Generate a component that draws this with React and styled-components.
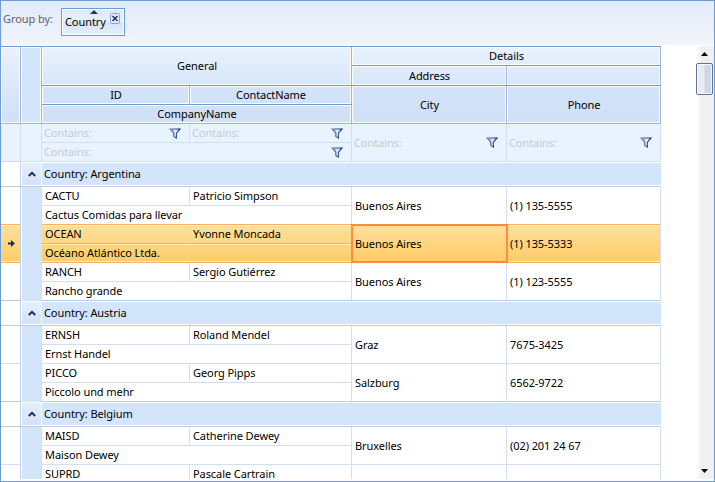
import React from "react";
import styled, { createGlobalStyle, css } from "styled-components";

const Reset = createGlobalStyle`
  *, *::before, *::after { box-sizing: border-box; }
  body { margin: 0; background: #fff; overflow: hidden; }
`;

const COLUMNS = "148px 162px 155px 154px";

const Frame = styled.div`
  width: 715px;
  height: 482px;
  display: flex;
  flex-direction: column;
  border: 1px solid #6f9bd5;
  background: #fff;
  color: #000;
  font: 11px/18px "Noto Sans", "Open Sans", sans-serif;
  letter-spacing: -0.08px;
  white-space: nowrap;
  overflow: hidden;
`;

const GroupPanel = styled.div`
  flex: none;
  height: 45px;
  display: flex;
  align-items: flex-start;
  padding: 7px 0 0 2px;
  border-bottom: 1px solid #fff;
  background: linear-gradient(#e1ebfa, #f1f4fc);
  color: #5c626e;
`;

const GroupLabel = styled.span`
  width: 58px;
  padding-top: 2px;
`;

const GroupChip = styled.div`
  position: relative;
  width: 64px;
  height: 28px;
  padding: 4px 0 0 3px;
  border: 1px solid #6f9bd5;
  box-shadow: inset 0 0 0 1px #fff;
  background: linear-gradient(#d8e7fa, #e9f2fd 48%, #d3e3f9 52%, #e6f0fc);
  color: #000;
`;

const SortMark = styled.svg`
  position: absolute;
  left: 28px;
  top: 1px;
`;

const CloseBox = styled.svg`
  position: absolute;
  right: 4px;
  top: 4px;
`;

const Body = styled.div`
  flex: 1;
  min-height: 0;
  display: flex;
`;

const Table = styled.div`
  width: 660px;
  height: 433px;
  overflow: hidden;
`;

const Line = styled.div`
  display: grid;
  grid-template-columns: 20px 21px 619px;
  height: ${(p) => p.$h}px;
`;

const HeadLine = styled(Line)`
  height: 78px;
`;

const HeadCell = styled.div`
  display: flex;
  align-items: center;
  justify-content: center;
  padding-left: 1px;
  grid-area: ${(p) => p.$area};
  border-right: 1px solid #a0b5d4;
  border-bottom: 1px solid ${(p) => (p.$last ? "#a0b5d4" : "#6f9bd5")};
  box-shadow: inset 0 0 0 1px #fbfdff;
  background: linear-gradient(${(p) => p.$from}, ${(p) => p.$to});
`;

const HeadGrid = styled.div`
  display: grid;
  grid-template-columns: ${COLUMNS};
  grid-template-rows: 19px 20px 19px 19px;
  border-top: 1px solid #6f9bd5;
`;

const HeadSide = styled.div`
  border-top: 1px solid #6f9bd5;
  border-right: 1px solid #a0b5d4;
  border-bottom: 1px solid #a0b5d4;
  box-shadow: inset 0 0 0 1px #fbfdff;
  background: ${(p) => (p.$flat ? "#d3e5fb" : "linear-gradient(#e9f2fd, #cfdff7)")};
`;

const FilterSide = styled.div`
  background: #e9f3ff;
  border-right: 1px solid #d0dff3;
  border-bottom: 1px solid #d0dff3;
`;

const CellGrid = styled.div`
  display: grid;
  grid-template-columns: ${COLUMNS};
  grid-template-rows: 19px 19px;
`;

const FilterCell = styled.div`
  grid-area: ${(p) => p.$area};
  display: flex;
  align-items: center;
  justify-content: space-between;
  padding: 0 8px 0 2px;
  border-right: 1px solid #d0dff3;
  border-bottom: 1px solid #d0dff3;
  background: #e9f3ff;
  color: #c6c9cf;
`;

const Indicator = styled.div`
  display: flex;
  align-items: center;
  justify-content: center;
  padding-left: 2px;
  border-right: 1px solid #bfd0e9;
  border-bottom: 1px solid ${(p) => (p.$end ? "#bacbe5" : "#d0dff3")};
  ${(p) =>
    p.$selected &&
    css`
      margin-top: -1px;
      border-top: 1px solid #fdb15e;
      border-bottom-color: #fdb15e;
      box-shadow: inset 0 1px #fff3ac, inset 0 -1px #fff09a;
      background: linear-gradient(#ffe09d, #ffcc67);
    `}
`;

const Indent = styled.div`
  margin-left: 1px;
  border-right: 1px solid #d0dff3;
  background: #d3e5fb;
`;

const GroupIndicator = styled.div`
  border-right: 1px solid #bfd0e9;
  border-bottom: 1px solid #bacbe5;
`;

const Expander = styled.div`
  display: flex;
  align-items: center;
  justify-content: center;
  border-bottom: 1px solid #bacbe5;
  box-shadow: inset 0 0 0 1px #fff;
  background: linear-gradient(#e6effb, #d3e2f7);
`;

const GroupTitle = styled.div`
  padding: 3px 0 0 2px;
  border-bottom: 1px solid #bacbe5;
  box-shadow: inset 0 1px #fff, inset 0 -1px #fff;
  background: #d3e5fb;
`;

const Cell = styled.div`
  grid-area: ${(p) => p.$area};
  display: flex;
  align-items: center;
  padding-left: 3px;
  border-right: 1px solid #d0dff3;
  border-bottom: 1px solid ${(p) => (p.$end ? "#bacbe5" : "#d0dff3")};
  ${(p) =>
    p.$selected &&
    css`
      border-bottom-color: #fdb15e;
      box-shadow: inset 0 1px #fff3ac${(p) => (p.$half ? "" : ", inset 0 -1px #fff09a")};
      background: ${p.$tone};
    `}
  ${(p) =>
    p.$selected &&
    p.$top &&
    css`
      margin-top: -1px;
      border-top: 1px solid #fdb15e;
    `}
  ${(p) =>
    p.$current &&
    css`
      position: relative;
      margin: -1px -1px 0 -1px;
      padding-left: 2px;
      border: 2px solid #ff8b3d;
      box-shadow: none;
      z-index: 1;
    `}
`;

const ScrollTrack = styled.div`
  flex: none;
  width: 18px;
  height: 433px;
  margin-left: auto;
  padding-right: 1px;
  display: flex;
  flex-direction: column;
  align-items: center;
  background: linear-gradient(90deg, #fff, #f0f0f0 30%);
  svg { flex: none; }
`;

const ScrollThumb = styled.div`
  width: 17px;
  height: 32px;
  margin: 7px 0 auto 0;
  border: 1px solid #5f7396;
  border-radius: 2px;
  box-shadow: inset 0 0 0 1px #f8fafd;
  background: linear-gradient(90deg, #e9ebf1 48%, #cfd6e5 52%);
`;

const Arrow = styled.svg`
  margin: ${(p) => (p.$down ? "0 1px 6px 0" : "6px 1px 0 0")};
`;

const Funnel = () => (
  <svg width="12" height="11" viewBox="0 0 12 11">
    <defs>
      <linearGradient id="funnel" x2="1">
        <stop offset="0" stopColor="#fff" />
        <stop offset="0.25" stopColor="#8fb0e6" />
        <stop offset="0.55" stopColor="#edf4fe" />
        <stop offset="1" stopColor="#9fb8dc" />
      </linearGradient>
      <linearGradient id="rim" x2="1">
        <stop offset="0" stopColor="#6583bd" />
        <stop offset="1" stopColor="#122b62" />
      </linearGradient>
    </defs>
    <path d="M1 1H11L7.4 5.2V10L4.8 8.4V5.2Z" fill="url(#funnel)" stroke="url(#rim)" strokeWidth="1.1" />
  </svg>
);

const Chevron = () => (
  <svg width="8" height="6" viewBox="0 0 8 6">
    <path d="M0.8 5L4 1.8L7.2 5" fill="none" stroke="#142e66" strokeWidth="2" />
  </svg>
);

const CurrentArrow = () => (
  <svg width="7" height="7" viewBox="0 0 7 7">
    <path d="M0 2.5H3V0L7 3.5L3 7V4.5H0Z" fill="#142e66" />
  </svg>
);

const GROUPS = [
  {
    country: "Argentina",
    rows: [
      ["CACTU", "Patricio Simpson", "Cactus Comidas para llevar", "Buenos Aires", "(1) 135-5555"],
      ["OCEAN", "Yvonne Moncada", "Océano Atlántico Ltda.", "Buenos Aires", "(1) 135-5333"],
      ["RANCH", "Sergio Gutiérrez", "Rancho grande", "Buenos Aires", "(1) 123-5555"],
    ],
  },
  {
    country: "Austria",
    rows: [
      ["ERNSH", "Roland Mendel", "Ernst Handel", "Graz", "7675-3425"],
      ["PICCO", "Georg Pipps", "Piccolo und mehr", "Salzburg", "6562-9722"],
    ],
  },
  {
    country: "Belgium",
    rows: [
      ["MAISD", "Catherine Dewey", "Maison Dewey", "Bruxelles", "(02) 201 24 67"],
      ["SUPRD", "Pascale Cartrain", "", "", ""],
    ],
  },
];

function Header() {
  return (
    <HeadLine>
      <HeadSide />
      <HeadSide $flat />
      <HeadGrid>
        <HeadCell $area="1 / 1 / 3 / 3" $from="#e9f2fd" $to="#d7e7fa">General</HeadCell>
        <HeadCell $area="3 / 1 / 4 / 2" $from="#d3e4fa" $to="#d1e1f8">ID</HeadCell>
        <HeadCell $area="3 / 2 / 4 / 3" $from="#d3e4fa" $to="#d1e1f8">ContactName</HeadCell>
        <HeadCell $area="4 / 1 / 5 / 3" $from="#d1e1f8" $to="#cfdff6" $last>CompanyName</HeadCell>
        <HeadCell $area="1 / 3 / 2 / 5" $from="#e9f2fd" $to="#e1edfb">Details</HeadCell>
        <HeadCell $area="2 / 3 / 3 / 4" $from="#dfebfb" $to="#d7e7fa">Address</HeadCell>
        <HeadCell $area="2 / 4 / 3 / 5" $from="#dfebfb" $to="#d7e7fa" />
        <HeadCell $area="3 / 3 / 5 / 4" $from="#d3e4fa" $to="#cfdff6" $last>City</HeadCell>
        <HeadCell $area="3 / 4 / 5 / 5" $from="#d3e4fa" $to="#cfdff6" $last>Phone</HeadCell>
      </HeadGrid>
    </HeadLine>
  );
}

function FilterRow() {
  const areas = ["1 / 1 / 2 / 2", "1 / 2 / 2 / 3", "2 / 1 / 3 / 3", "1 / 3 / 3 / 4", "1 / 4 / 3 / 5"];
  return (
    <Line $h={38}>
      <FilterSide />
      <FilterSide />
      <CellGrid>
        {areas.map((area) => (
          <FilterCell key={area} $area={area}>
            Contains:
            <Funnel />
          </FilterCell>
        ))}
      </CellGrid>
    </Line>
  );
}

function Record({ data, selected, end }) {
  const [id, contact, company, city, phone] = data;
  const upper = "linear-gradient(#ffe09d, #ffd683)";
  const lower = "linear-gradient(#ffd681, #ffcc67)";
  const full = "linear-gradient(#ffe09d, #ffcc67)";
  return (
    <Line $h={38}>
      <Indicator $selected={selected} $end={end}>{selected && <CurrentArrow />}</Indicator>
      <Indent />
      <CellGrid>
        <Cell $area="1 / 1 / 2 / 2" $selected={selected} $top $half $tone={upper}>{id}</Cell>
        <Cell $area="1 / 2 / 2 / 3" $selected={selected} $top $half $tone={upper}>{contact}</Cell>
        <Cell $area="2 / 1 / 3 / 3" $selected={selected} $tone={lower} $end={end}>{company}</Cell>
        <Cell $area="1 / 3 / 3 / 4" $selected={selected} $top $tone={full} $current={selected} $end={end}>{city}</Cell>
        <Cell $area="1 / 4 / 3 / 5" $selected={selected} $top $tone={full} $end={end}>{phone}</Cell>
      </CellGrid>
    </Line>
  );
}

function Group({ group }) {
  return (
    <>
      <Line $h={25}>
        <GroupIndicator />
        <Expander><Chevron /></Expander>
        <GroupTitle>Country: {group.country}</GroupTitle>
      </Line>
      {group.rows.map((data, i) => (
        <Record key={data[0]} data={data} selected={data[0] === "OCEAN"} end={i === group.rows.length - 1} />
      ))}
    </>
  );
}

export default function App() {
  return (
    <>
      <Reset />
      <Frame>
        <GroupPanel>
          <GroupLabel>Group by:</GroupLabel>
          <GroupChip>
            <SortMark width="8" height="4" viewBox="0 0 8 4"><path d="M0 4L4 0L8 4Z" fill="#1a3974" /></SortMark>
            Country
            <CloseBox width="10" height="11" viewBox="0 0 10 11">
              <rect x="0.5" y="0.5" width="9" height="10" rx="1" fill="#e4eefb" stroke="#8ba4cf" />
              <path d="M2.5 3L7.5 8M7.5 3L2.5 8" stroke="#17387a" strokeWidth="1.6" />
            </CloseBox>
          </GroupChip>
        </GroupPanel>
        <Body>
          <Table>
            <Header />
            <FilterRow />
            {GROUPS.map((group) => <Group key={group.country} group={group} />)}
          </Table>
          <ScrollTrack>
            <Arrow width="7" height="4" viewBox="0 0 7 4"><path d="M0 4L3.5 0L7 4Z" fill="#000" /></Arrow>
            <ScrollThumb />
            <Arrow $down width="7" height="4" viewBox="0 0 7 4"><path d="M0 0H7L3.5 4Z" fill="#000" /></Arrow>
          </ScrollTrack>
        </Body>
      </Frame>
    </>
  );
}
